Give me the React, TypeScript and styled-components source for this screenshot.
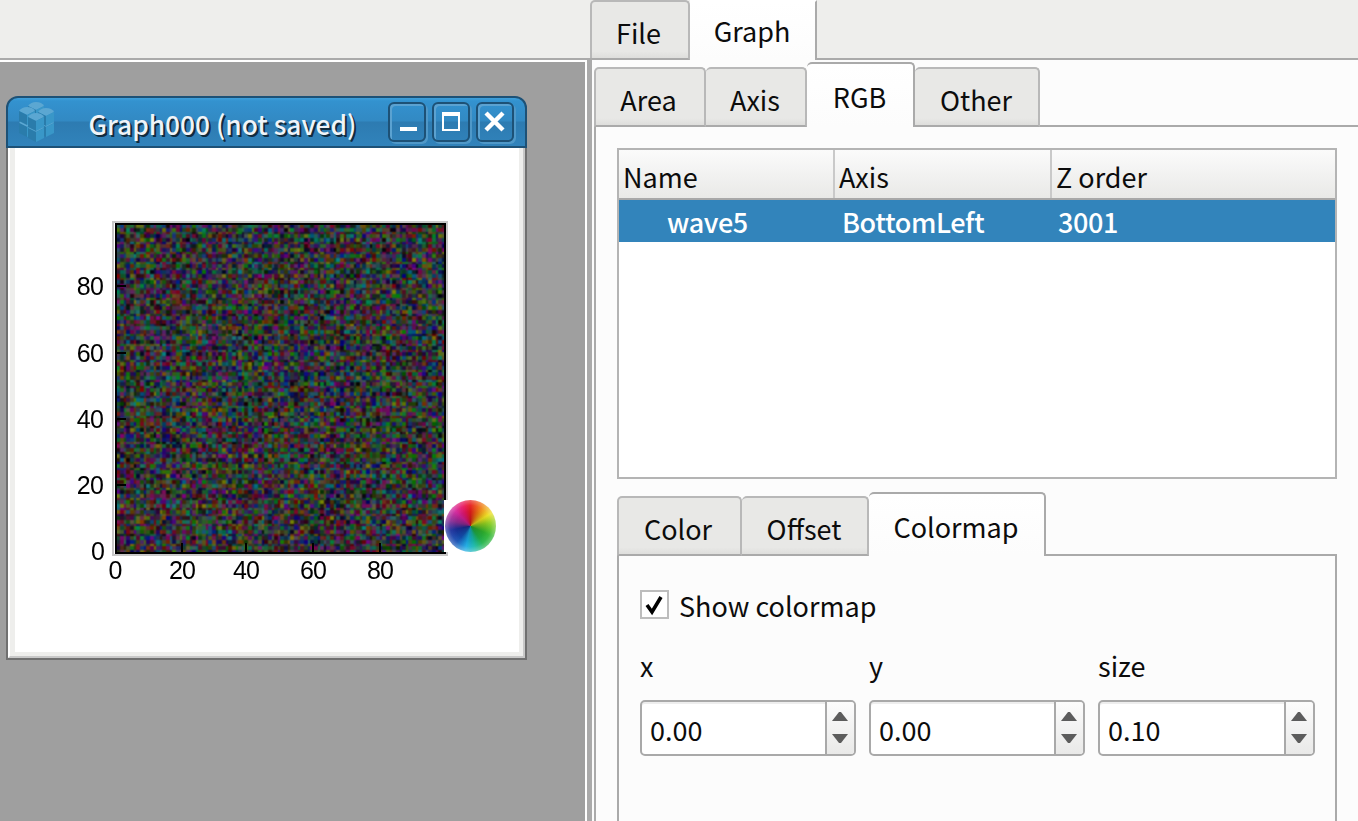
import React, { useLayoutEffect, useRef } from "react";
import styled, { createGlobalStyle, css } from "styled-components";

const Global = createGlobalStyle`
  *, *::before, *::after { box-sizing: border-box; }
  html, body { margin: 0; padding: 0; overflow: hidden; }
  body {
    font-family: "Noto Sans CJK SC", "Noto Sans", sans-serif;
    font-size: 27px;
    line-height: 40px;
    color: #0c0c0c;
    background: #fcfcfc;
  }
`;

const Screen = styled.div`
  display: flex;
  width: 1358px;
  height: 821px;
  overflow: hidden;
`;

const Left = styled.div`
  display: flex;
  flex-direction: column;
  width: 587px;
`;

const TopBar = styled.div`
  height: 60px;
  background: #eeeeec;
  border-bottom: 2px solid #aaaaaa;
`;

const Workspace = styled.div`
  position: relative;
  flex: 1;
  background: #9f9f9f;
  border-top: 2px solid #fff;
  border-right: 2px solid #fff;
`;

const Splitter = styled.div`
  display: flex;
  flex-direction: column;
  width: 5px;
  margin-right: -2px;
  background: linear-gradient(90deg, #eeeeec 3px, transparent 3px) 0 0 / 100% 58px no-repeat,
    linear-gradient(#aaaaaa, #aaaaaa) 0 58px no-repeat;
  z-index: 1;
`;

const Right = styled.div`
  display: flex;
  flex-direction: column;
  width: 768px;
  background: #fcfcfc;
`;

const TabStrip = styled.div<{ $height: number; $bg?: string; $indent?: number }>`
  display: flex;
  align-items: flex-end;
  height: ${(p) => p.$height}px;
  margin-left: ${(p) => p.$indent || 0}px;
  background: ${(p) => p.$bg || "transparent"};
  box-shadow: inset 0 -2px #aaaaaa;
`;

const Tab = styled.div<{ $w: number; $active?: boolean; $h?: number; $first?: boolean; $pad?: number }>`
  width: ${(p) => p.$w}px;
  height: ${(p) => p.$h || 60}px;
  padding: ${(p) => p.$pad ?? (p.$active ? 13 : 11)}px ${(p) => (p.$first ? 3 : 1)}px 0 0;
  text-align: center;
  white-space: nowrap;
  border: 2px solid #b8b8b8;
  border-left-width: ${(p) => (p.$first ? 2 : 0)}px;
  border-bottom-color: #aaaaaa;
  border-radius: 5px 5px 0 0;
  background: linear-gradient(#e8e8e6 88%, #dededc);
  ${(p) =>
    p.$active &&
    css`
      border-color: #aaaaaa;
      border-left-width: 0;
      border-bottom: 0;
      background: linear-gradient(#ffffff, #fcfcfc);
    `}
`;

const TopTab = styled(Tab)`
  ${(p) => p.$active && css`border-top-color: #ffffff; border-radius: 0;`}
`;

const Pane = styled.div`
  display: flex;
  flex-direction: column;
  flex: 1;
  margin-left: 4px;
  padding: 21px 21px 0;
  border-left: 2px solid #aaaaaa;
`;

const Table = styled.div`
  height: 331px;
  border: 2px solid #b4b4b4;
  background: #fff;
`;

const HeaderRow = styled.div`
  display: grid;
  grid-template-columns: 216px 217px 1fr;
  height: 50px;
  border-bottom: 2px solid #a8a8a8;
  background: linear-gradient(#fbfbfb, #e9e9e7);
`;

const HeaderCell = styled.div`
  padding: 7px 0 0 4px;
  border-right: 2px solid #c9c9c9;
  &:last-child { border-right: 0; }
`;

const DataRow = styled.div`
  display: grid;
  grid-template-columns: 223px 216px 1fr;
  height: 42px;
  padding-top: 2px;
  color: #fff;
  font-weight: 500;
  letter-spacing: -0.4px;
  background: #3284bb;
`;

const DataCell = styled.div<{ $indent?: number }>`
  padding-left: ${(p) => p.$indent || 0}px;
`;

const Options = styled.div`
  flex: 1;
  padding: 34px 21px 0;
  border: solid #aaaaaa;
  border-width: 0 2px;
`;

const CheckRow = styled.div`
  display: flex;
  align-items: center;
  gap: 10px;
  height: 29px;
`;

const CheckLabel = styled.span`
  padding-top: 2px;
`;

const CheckBox = styled.span`
  width: 29px;
  height: 29px;
  border: 2px solid #bdbdbd;
  background: #fff;
  svg { display: block; }
`;

const Fields = styled.div`
  display: grid;
  grid-template-columns: 216px 216px 217px;
  column-gap: 13px;
  margin-top: 27px;
`;

const FieldLabel = styled.div`
  height: 54px;
`;

const Spin = styled.div`
  display: flex;
  height: 56px;
  border: 2px solid #a9a9a9;
  border-radius: 5px;
  background: #fff;
  box-shadow: inset 0 2px #eeeeee;
  overflow: hidden;
`;

const SpinValue = styled.div`
  flex: 1;
  padding: 8px 0 0 8px;
`;

const SpinButtons = styled.div`
  display: flex;
  flex-direction: column;
  align-items: center;
  gap: 13px;
  width: 29px;
  padding: 10px 2px 0 0;
  border-left: 2px solid #a9a9a9;
  background: linear-gradient(#fcfcfc, #e9e9e8);
  svg { display: block; }
`;

const Frame = styled.div`
  position: absolute;
  left: 6px;
  top: 34px;
  width: 521px;
  height: 564px;
  display: flex;
  flex-direction: column;
`;

const TitleBar = styled.div`
  display: flex;
  align-items: flex-start;
  height: 52px;
  border: 2px solid #1d5176;
  border-radius: 12px 12px 0 0;
  background: linear-gradient(#3da0dc 0, #3392cf 3px, #3289c3 23px, #2d7bb1 24px, #3183bb 100%);
`;

const Logo = styled.svg`
  display: block;
  margin: 3px 0 0 10px;
`;

const Title = styled.div`
  width: 334px;
  padding: 6px 0 0 3px;
  text-align: center;
  font-size: 26.3px;
  font-weight: 500;
  color: #f0f4f8;
  text-shadow: 2px 2px 0 #122b3d;
`;

const WinButton = styled.div`
  width: 38px;
  height: 40px;
  margin: 4px 6px 0 0;
  border: 2px solid #1d5176;
  border-radius: 6px;
  box-shadow: inset 2px 2px #5ba2d1, 2px 2px #4f98c8;
  svg { display: block; }
`;

const Body = styled.div`
  flex: 1;
  border: solid #707070;
  border-width: 0 2px 2px;
  background: #fff;
`;

const Bevel = styled.div`
  height: 100%;
  border: 2px solid;
  border-color: transparent #c8c8c8 #c8c8c8 #fff;
  border-top: 0;
`;

const Canvas = styled.div`
  position: relative;
  height: 100%;
  border: solid #eeeeec;
  border-width: 0 4px 4px 5px;
`;

const Noise = styled.canvas`
  position: absolute;
  left: 101px;
  top: 76px;
  width: 328px;
  height: 328px;
`;

const Axes = styled.svg`
  position: absolute;
  left: 0;
  top: 0;
  font-family: "Liberation Sans", Arial, sans-serif;
  font-size: 25px;
  letter-spacing: -0.8px;
`;

const Wheel = styled.div`
  position: absolute;
  left: 429px;
  top: 352px;
  width: 53px;
  height: 52px;
  background: #fff;
  &::before {
    content: "";
    display: block;
    width: 51px;
    height: 52px;
    margin-left: 1px;
    border-radius: 50%;
    background:
      radial-gradient(rgba(0, 0, 0, 0.26), rgba(0, 0, 0, 0.08) 40%, rgba(255, 255, 255, 0.06) 56%, rgba(255, 255, 255, 0.34) 71%),
      conic-gradient(#e61c1c, #ef7c12 30deg, #ecdf1e 58deg, #92cf20 80deg, #2fb52f 115deg, #20b34a 145deg, #18b9ac 170deg, #19aae4 192deg, #1450b4 220deg, #1b2f9c 258deg, #8b2d96 285deg, #d3219a 315deg, #e8145c 340deg, #e61c1c);
  }
`;

const SIZE = 164;
const CELLS = 100;

function RgbImage() {
  const ref = useRef<HTMLCanvasElement>(null);
  useLayoutEffect(() => {
    const ctx = ref.current!.getContext("2d")!;
    let seed = 20177;
    const rand = () => {
      seed = (seed + 0x6d2b79f5) | 0;
      let t = Math.imul(seed ^ (seed >>> 15), 1 | seed);
      t = (t + Math.imul(t ^ (t >>> 7), 61 | t)) ^ t;
      return ((t ^ (t >>> 14)) >>> 0) / 4294967296;
    };
    const cells: number[] = [];
    for (let i = 0; i < CELLS * CELLS; i++) {
      const rgb = [rand() * 132, rand() * 132, rand() * 136];
      const low = Math.min(...rgb) * 0.4;
      cells.push(...rgb.map((v) => Math.round(v - low)));
    }
    const img = ctx.createImageData(SIZE, SIZE);
    for (let y = 0; y < SIZE; y++) {
      for (let x = 0; x < SIZE; x++) {
        const c = (Math.floor((y * CELLS) / SIZE) * CELLS + Math.floor((x * CELLS) / SIZE)) * 3;
        const o = (y * SIZE + x) * 4;
        img.data[o] = cells[c];
        img.data[o + 1] = cells[c + 1];
        img.data[o + 2] = cells[c + 2];
        img.data[o + 3] = 255;
      }
    }
    ctx.putImageData(img, 0, 0);
  }, []);
  return <Noise ref={ref} width={SIZE} height={SIZE} />;
}

/* Chart coordinates: origin is the top-left corner of the drawing area. */
const yTicks = [
  { v: 80, y: 138 },
  { v: 60, y: 205 },
  { v: 40, y: 271 },
  { v: 20, y: 337 },
];
const xTicks = [
  { v: 20, x: 167 },
  { v: 40, x: 231 },
  { v: 60, x: 298 },
  { v: 80, x: 365 },
];

function Chart() {
  return (
    <Canvas>
      <RgbImage />
      <Axes width="504" height="504">
        <rect x="98" y="74" width="334" height="333" fill="none" stroke="#c8c8c8" strokeWidth="2" />
        <rect x="101" y="76" width="329" height="329" fill="none" stroke="#000" strokeWidth="2" />
        {yTicks.map((t) => (
          <rect key={t.v} x="102" y={t.y - 1} width="9" height="2" />
        ))}
        {xTicks.map((t) => (
          <rect key={t.v} x={t.x - 1} y="395" width="2" height="9" />
        ))}
        {yTicks.map((t) => (
          <text key={t.v} x="88" y={t.y + 9} textAnchor="end">{t.v}</text>
        ))}
        <text x="89" y="412" textAnchor="end">0</text>
        <text x="100" y="431" textAnchor="middle">0</text>
        {xTicks.map((t) => (
          <text key={t.v} x={t.x} y="431" textAnchor="middle">{t.v}</text>
        ))}
      </Axes>
      <Wheel />
    </Canvas>
  );
}

function Cube({ x, y }: { x: number; y: number }) {
  return (
    <g transform={`translate(${x} ${y})`}>
      <path d="M0 4 Q3 0 8 0 Q14 0 16 4 L8 8Z" fill="#5ba7d2" />
      <path d="M0 4 L8 8 V18 L0 14Z" fill="#2a7cab" />
      <path d="M16 4 L8 8 V18 L16 14Z" fill="#3997c8" />
    </g>
  );
}

function CubesLogo() {
  return (
    <Logo width="36" height="42" viewBox="0 0 36 42">
      <Cube x={10} y={1} />
      <Cube x={1} y={18} />
      <Cube x={20} y={18} />
      <Cube x={1} y={6} />
      <Cube x={20} y={7} />
      <Cube x={10} y={23} />
      <Cube x={10} y={12} />
    </Logo>
  );
}

function SpinBox({ value }: { value: string }) {
  return (
    <Spin>
      <SpinValue>{value}</SpinValue>
      <SpinButtons>
        <svg width="16" height="9"><path d="M0 9 L7 0 H9 L16 9Z" fill="#5c5c5c" /></svg>
        <svg width="16" height="9"><path d="M0 0 L7 9 H9 L16 0Z" fill="#5c5c5c" /></svg>
      </SpinButtons>
    </Spin>
  );
}

export default function App() {
  return (
    <>
      <Global />
      <Screen>
        <Left>
          <TopBar />
          <Workspace>
            <Frame>
              <TitleBar>
                <CubesLogo />
                <Title>Graph000 (not saved)</Title>
                <WinButton>
                  <svg width="34" height="36"><path d="M10 23H27V27H10Z" fill="#fff" /></svg>
                </WinButton>
                <WinButton>
                  <svg width="34" height="36"><path d="M8 8H26V27H8Z M10 12V25H24V12Z" fill="#fff" fillRule="evenodd" /></svg>
                </WinButton>
                <WinButton>
                  <svg width="34" height="36"><path d="M8 9L25 26M25 9L8 26" stroke="#fff" strokeWidth="4.4" strokeLinecap="butt" /></svg>
                </WinButton>
              </TitleBar>
              <Body><Bevel><Chart /></Bevel></Body>
            </Frame>
          </Workspace>
        </Left>
        <Splitter />
        <Right>
          <TabStrip $height={60} $bg="#eeeeec">
            <TopTab $w={100} $first>File</TopTab>
            <TopTab $w={127} $active $pad={9}>Graph</TopTab>
          </TabStrip>
          <TabStrip $height={67} $indent={4}>
            <Tab $w={112} $first>Area</Tab>
            <Tab $w={101}>Axis</Tab>
            <Tab $w={108} $active $h={65}>RGB</Tab>
            <Tab $w={125}>Other</Tab>
          </TabStrip>
          <Pane>
            <Table>
              <HeaderRow>
                <HeaderCell>Name</HeaderCell>
                <HeaderCell>Axis</HeaderCell>
                <HeaderCell>Z order</HeaderCell>
              </HeaderRow>
              <DataRow>
                <DataCell $indent={48}>wave5</DataCell>
                <DataCell>BottomLeft</DataCell>
                <DataCell>3001</DataCell>
              </DataRow>
            </Table>
            <TabStrip $height={77}>
              <Tab $w={125} $first>Color</Tab>
              <Tab $w={127}>Offset</Tab>
              <Tab $w={177} $active $h={64}>Colormap</Tab>
            </TabStrip>
            <Options>
              <CheckRow>
                <CheckBox>
                  <svg width="25" height="25"><path d="M5 13L10 20L19 5" fill="none" stroke="#000" strokeWidth="3.6" /></svg>
                </CheckBox>
                <CheckLabel>Show colormap</CheckLabel>
              </CheckRow>
              <Fields>
                <FieldLabel>x</FieldLabel>
                <FieldLabel>y</FieldLabel>
                <FieldLabel>size</FieldLabel>
                <SpinBox value="0.00" />
                <SpinBox value="0.00" />
                <SpinBox value="0.10" />
              </Fields>
            </Options>
          </Pane>
        </Right>
      </Screen>
    </>
  );
}
